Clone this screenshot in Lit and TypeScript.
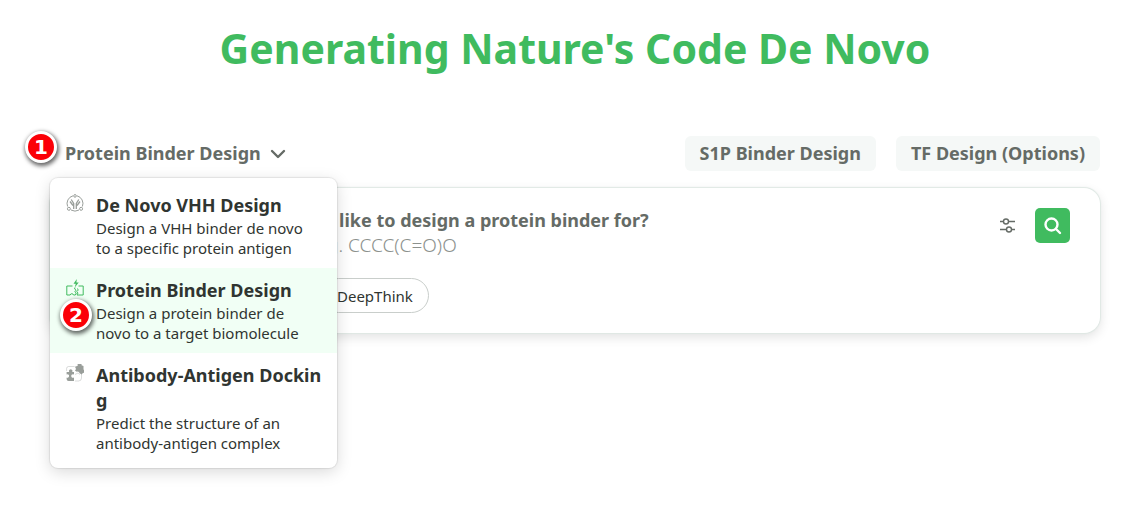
import { LitElement, html, css, svg } from "lit";
import { customElement, state } from "lit/decorators.js";

const icons = {
  vhh: svg`<svg viewBox="0 0 18 18" fill="none" stroke="currentColor" stroke-width="1" aria-hidden="true">
    <path d="M1.600 12.500A8 8 0 0 1 7 1.800M11 1.800A8 8 0 0 1 16.400 12.500M5 16a8 8 0 0 0 8 0"/>
    <circle cx="9" cy="1.900" r="1.300"/><circle cx="2.900" cy="14.800" r="1.500"/><circle cx="15.100" cy="14.800" r="1.500"/>
    <path d="M7.700 15V9.500L5.200 5.500M10.300 15V9.500l2.500-4M7 11.500L4 7.500M11 11.500L14 7.500" stroke-width="1.300"/></svg>`,
  binder: svg`<svg viewBox="0 0 18 18" fill="none" stroke="currentColor" stroke-width="1" aria-hidden="true">
    <path d="M6.500 7H.8v9h3.400a1.700 1.700 0 0 1 3.300 0h1.800l1-2-1.500-1.300 1.300-1.500-1.500-1.200.4-1.500"/>
    <path d="M12.500 7h4.700v9h-6.200l1-2-1.200-1.400 1.400-1.500-.7-1.600"/>
    <path d="M10.800 0L7.500 4.800h2.300L8.700 8.500l4-5h-2.300z" fill="currentColor" stroke="none"/></svg>`,
  docking: svg`<svg viewBox="0 0 18 18" aria-hidden="true">
    <path d="M.6 7V4.500q0-2 2-2h6M15.500 9.500V14q0 3-3 3H9M9 10.500l3-1.500 2 1.500" fill="none" stroke="currentColor" stroke-width=".7" opacity=".5"/>
    <path d="M.6 8h2.600a1.800 1.800 0 1 1 3 0H8v2.500a1.800 1.800 0 1 0 0 3V17H2.600q-2 0-2-2v-1.500a1.700 1.700 0 1 0 0-3z" fill="currentColor"/>
    <path d="M9 2.800l2.800-1.100a2 2 0 1 1 3.700-.4l2 .8v3.400a1.900 1.900 0 0 1-.6 3.500L15.600 10.500l-2.200-1.400a1.700 1.700 0 0 0-2.600-1.300L9 6.800l1-1.800z" fill="currentColor"/></svg>`,
};

@customElement("app-root")
export class AppRoot extends LitElement {
  static styles = css`
    :host { display: block; font-family: "Noto Sans", "Open Sans", sans-serif; color: #303531; }
    * { box-sizing: border-box; }
    button, input { font: inherit; color: inherit; border: 0; background: none; padding: 0; margin: 0; }
    svg { display: block; }
    .page { min-height: 100vh; padding: 18px 23px 48px 50px; }
    h1 { margin: 0 0 58px; text-align: center; font-size: 41px; line-height: 60px; font-weight: 700; color: #40bb5f; }
    .bar { display: flex; align-items: center; gap: 20px; margin-bottom: 17px; }
    .picker { position: relative; margin-right: auto; }
    .trigger { display: flex; align-items: center; gap: 9px; height: 35px; padding-left: 15px; }
    .trigger, .example { font-size: 18px; line-height: 25px; font-weight: 700; color: #656b66; }
    .chevron { width: 16px; height: 16px; }
    .example { height: 35px; padding: 0 15px; border-radius: 6px; background: #f5f8f7; }
    .menu { position: absolute; z-index: 2; top: 42px; left: 0; width: 287px; padding: 5px 0; overflow: hidden; border-radius: 8px;
      background: #fff; box-shadow: 0 0 1px 1px #00000014, 0 4px 16px #00000026; }
    .item { display: flex; gap: 11px; width: 100%; padding: 10px 14px 10px 15px; text-align: left; }
    .item.active { background: #f1fff5; }
    .item-icon { flex: none; width: 20px; color: #999e9a; }
    .item-icon svg { width: 18px; height: 18px; margin-top: 1px; margin-left: 1px; }
    .active .item-icon { color: #40bb5f; }
    .name { display: block; font-size: 18px; line-height: 25px; font-weight: 700; word-break: break-all; }
    .about { display: block; padding-right: 10px; font-size: 15px; line-height: 20px; }
    .badge { position: absolute; z-index: 3; display: grid; place-items: center; width: 32px; height: 32px; border-radius: 50%;
      border: 3px solid #fff; background: #fb0007; color: #fff; font-family: "DejaVu Sans", sans-serif; font-size: 20px; line-height: 24px; font-weight: 700;
      box-shadow: 1px 2px 4px 1px #00000099; }
    .badge.one { left: -25px; top: -5px; }
    .badge.two { left: 10px; top: 163px; }
    .card { display: flex; align-items: flex-start; gap: 18px; padding: 20px 30px; border-radius: 16px;
      background: #fff; box-shadow: 0 0 1px 1px #dfe8e4, 0 4px 12px #0000001f; }
    .prompt { flex: 1; min-width: 0; padding-left: 109px; }
    .prompt label { display: block; font-size: 18px; line-height: 25px; font-weight: 700; color: #656b66; }
    .prompt input { display: block; width: 100%; height: 24px; padding-left: 123px; font-size: 19px; font-weight: 300; outline: 0; }
    .prompt input::placeholder { color: #8c918d; opacity: 1; }
    .modes { display: flex; padding-left: 132px; margin-top: 21px; }
    .mode { height: 35px; padding: 0 15px; border: 1px solid #c9cecb; border-radius: 18px; font-size: 15px; line-height: 20px; }
    .options { width: 18px; height: 35px; color: #656b66; }
    .search { display: grid; place-items: center; width: 35px; height: 35px; border-radius: 5px; background: #40bb5f; color: #fff; }
  `;

  @state() private selected = 1;

  private designs = [
    { icon: icons.vhh, name: "De Novo VHH Design", about: "Design a VHH binder de novo to a specific protein antigen" },
    { icon: icons.binder, name: "Protein Binder Design", about: "Design a protein binder de novo to a target biomolecule" },
    { icon: icons.docking, name: "Antibody-Antigen Docking", about: "Predict the structure of an antibody-antigen complex" },
  ];

  render() {
    return html`
      <main class="page">
        <h1>Generating Nature's Code De Novo</h1>
        <div class="bar">
          <div class="picker">
            <button class="trigger" aria-expanded="true" aria-controls="designs">
              ${this.designs[this.selected].name}
              <svg class="chevron" viewBox="0 0 16 16" fill="none" stroke="currentColor" stroke-width="2.4" stroke-linecap="round" stroke-linejoin="round" aria-hidden="true"><path d="M2 5l6 6 6-6"/></svg>
            </button>
            <div class="menu" id="designs">
              ${this.designs.map((d, i) => html`
                <button class="item ${i === this.selected ? "active" : ""}" @click=${() => (this.selected = i)}>
                  <span class="item-icon">${d.icon}</span>
                  <span><span class="name">${d.name}</span><span class="about">${d.about}</span></span>
                </button>`)}
            </div>
            <span class="badge one">1</span>
            <span class="badge two">2</span>
          </div>
          <button class="example">S1P Binder Design</button>
          <button class="example">TF Design (Options)</button>
        </div>
        <form class="card" @submit=${(e: Event) => e.preventDefault()}>
          <div class="prompt">
            <label for="target">What would you like to design a protein binder for?</label>
            <input id="target" placeholder="e.g. CCCC(C=O)O">
            <div class="modes">
              <button type="button" class="mode">DeepThink</button>
            </div>
          </div>
          <button type="button" class="options" aria-label="Options">
            <svg width="18" height="35" viewBox="0 0 18 35" fill="none" stroke="currentColor" stroke-width="1.400" aria-hidden="true"><path d="M1 13.500h3.500M9.500 13.500H16M1 21.500h6.500M12.500 21.500H16"/><circle cx="7" cy="13.500" r="2.500"/><circle cx="10" cy="21.500" r="2.500"/></svg>
          </button>
          <button class="search" aria-label="Search">
            <svg width="19" height="19" viewBox="0 0 19 19" fill="none" stroke="currentColor" stroke-width="2.400" stroke-linecap="round" aria-hidden="true"><circle cx="8.500" cy="8.500" r="6"/><path d="M13 13l4 4"/></svg>
          </button>
        </form>
      </main>`;
  }
}
